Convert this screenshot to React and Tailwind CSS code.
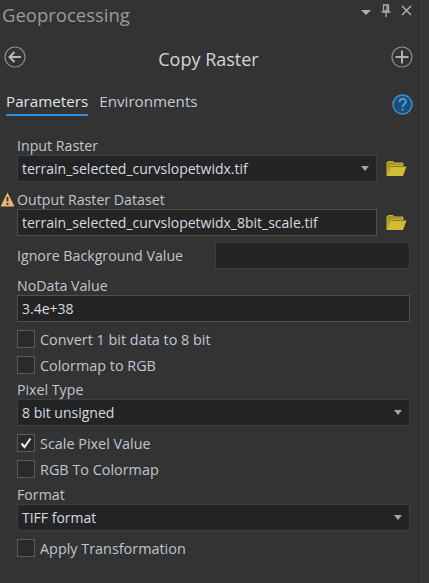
const FONT = "font-['Open_Sans','Noto_Sans',sans-serif]";

function Folder() {
  return (
    <svg width="21" height="17" viewBox="0 0 21 17" className="shrink-0">
      <path d="M1 15.5V2.5L2 1.5H7L8.5 3H17V5.5H5L1 15.5Z" fill="#a8952c" stroke="#c9b536" strokeWidth="1" />
      <path d="M1 16L5 6.5H20.5L17 16H1Z" fill="#d2bc34" />
    </svg>
  );
}

function Caret() {
  return <div className="h-0 w-0 border-x-[4.5px] border-t-[5px] border-x-transparent border-t-[#a5a5a5]" />;
}

function Label({ children, className = "" }) {
  return <div className={`h-[17px] text-[14.2px] leading-[17px] text-[#bfc7cf] ${className}`}>{children}</div>;
}

function Field({ children, caret, light, className = "" }) {
  return (
    <div className={`flex h-[27px] items-center justify-between border bg-[#242424] pl-[4px] pr-[7px] text-[14px] text-[#d5dbe2] ${light ? "border-[#4f4f4f]" : "border-[#3e3e3e]"} ${className}`}>
      <span>{children}</span>
      {caret && <Caret />}
    </div>
  );
}

function Check({ label, checked, className = "" }) {
  return (
    <div className={`flex h-[18px] items-center gap-[5px] ${className}`}>
      <div className="flex h-[18px] w-[18px] items-center justify-center border border-[#5a5a5a] bg-[#2a2a2a]">
        {checked && (
          <svg width="12" height="12" viewBox="0 0 12 12">
            <path d="M1.5 6.5L4.5 10L10.5 1.5" fill="none" stroke="#f0f0f0" strokeWidth="2" />
          </svg>
        )}
      </div>
      <span className="pt-[2px] text-[14.4px] leading-[18px] text-[#bfc7cf]">{label}</span>
    </div>
  );
}

export default function App() {
  return (
    <div className={`${FONT} flex h-[583px] w-[429px] overflow-hidden bg-[#333333]`}>
      <div className="w-[420px] shrink-0">
        <div className="flex h-[30px] items-start justify-between pl-[2px] pr-[8px]">
          <span className="text-[18.5px] leading-[29px] text-[#9a9a9a]">Geoprocessing</span>
          <div className="flex items-center gap-[10px] pt-[4px]">
            <div className="mt-[3px] h-0 w-0 border-x-[5px] border-t-[5px] border-x-transparent border-t-[#b0b0b0]" />
            <svg width="10" height="13" viewBox="0 0 10 13">
              <path d="M2.5 1H7.5V7H2.5ZM0.5 8H9.5M5 8V13M6 1V7" fill="none" stroke="#a8a8a8" strokeWidth="1.3" />
            </svg>
            <svg width="11" height="11" viewBox="0 0 11 11">
              <path d="M1 1L10 10M10 1L1 10" stroke="#b5b5b5" strokeWidth="1.4" />
            </svg>
          </div>
        </div>

        <div className="mt-[15px] flex h-[24px] items-center justify-between pl-[4px] pr-[7px]">
          <svg width="22" height="22" viewBox="0 0 22 22">
            <circle cx="11" cy="11" r="10" fill="none" stroke="#8f8f8f" strokeWidth="1.2" />
            <path d="M5.5 11H17M10.5 6L5.5 11L10.5 16" fill="none" stroke="#b8b8b8" strokeWidth="2" />
          </svg>
          <span className="pt-[4px] text-[18px] leading-[20px] text-[#d0d6dc]">Copy Raster</span>
          <svg width="22" height="22" viewBox="0 0 22 22">
            <circle cx="11" cy="11" r="10" fill="none" stroke="#8f8f8f" strokeWidth="1.2" />
            <path d="M11 4.5V17.5M4.5 11H17.5" stroke="#b0b0b0" strokeWidth="2" />
          </svg>
        </div>

        <div className="mt-[21px] flex items-start justify-between pl-[6px] pr-[7px]">
          <div className="flex gap-[11px] text-[15.2px] leading-[22px]">
            <div className="h-[26px] border-b-[2px] border-[#2a8fe0] text-[#dfe4e8]">Parameters</div>
            <div className="text-[#c4ccd4]">Environments</div>
          </div>
          <svg width="21" height="21" viewBox="0 0 21 21" className="mt-[4px]">
            <circle cx="10.5" cy="10.5" r="9.5" fill="#1f4f78" stroke="#3a92d0" strokeWidth="1.4" />
            <path d="M7.5 8C7.5 3.8 13.8 4 13.8 7.8C13.8 10.4 10.6 10.2 10.6 13" fill="none" stroke="#4aa3e0" strokeWidth="1.8" />
            <circle cx="10.6" cy="15.6" r="1.1" fill="#4aa3e0" />
          </svg>
        </div>

        <div className="mt-[21px] pl-[17px] pr-[10px]">
          <Label className="mt-[8px]">Input Raster</Label>
          <div className="mt-[1px] flex items-center gap-[9px]">
            <Field caret className="w-[360px]">terrain_selected_curvslopetwidx.tif</Field>
            <Folder />
          </div>

          <div className="relative mt-[9px]">
            <svg width="15" height="15" viewBox="0 0 15 15" className="absolute left-[-17px] top-[1px]">
              <path d="M7.5 0.5L14.5 14.5H0.5Z" fill="#e8b878" />
              <path d="M7.5 5V9.5M7.5 11V13" stroke="#3a3020" strokeWidth="1.8" />
            </svg>
            <Label>Output Raster Dataset</Label>
          </div>
          <div className="mt-[1px] flex items-center gap-[9px]">
            <Field light className="w-[360px]">terrain_selected_curvslopetwidx_8bit_scale.tif</Field>
            <Folder />
          </div>

          <div className="mt-[6px] flex items-center justify-between">
            <Label>Ignore Background Value</Label>
            <Field className="w-[195px]" />
          </div>

          <Label className="mt-[8px]">NoData Value</Label>
          <Field light className="mt-[1px]">3.4e+38</Field>

          <Check className="mt-[8px]" label="Convert 1 bit data to 8 bit" />
          <Check className="mt-[8px]" label="Colormap to RGB" />

          <Label className="mt-[7px]">Pixel Type</Label>
          <Field caret className="mt-[1px]">8 bit unsigned</Field>

          <Check checked className="mt-[8px]" label="Scale Pixel Value" />
          <Check className="mt-[8px]" label="RGB To Colormap" />

          <Label className="mt-[8px]">Format</Label>
          <Field caret className="mt-[1px]">TIFF format</Field>

          <Check className="mt-[8px]" label="Apply Transformation" />
        </div>
      </div>
      <div className="ml-[1px] w-[8px] border-l border-[#3e3e3e] bg-[#363636]" />
    </div>
  );
}
